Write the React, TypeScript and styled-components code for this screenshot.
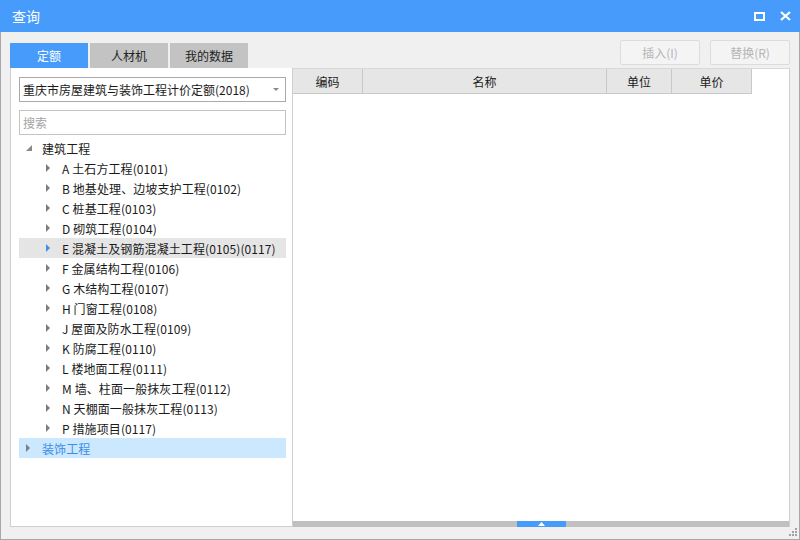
import { FC } from 'react'
import styled, { createGlobalStyle } from 'styled-components'

const GlobalStyle = createGlobalStyle`
	html, body {
		margin: 0;
		padding: 0;
		background: #ffffff;
	}
	body {
		font-family: "Noto Sans CJK SC", "Liberation Sans", sans-serif;
		font-size: 12px;
		color: #1a1a1a;
	}
`

const accent = '#479cfb'

const Window = styled.div`
	position: relative;
	width: 800px;
	height: 540px;
	box-sizing: border-box;
	display: flex;
	flex-direction: column;
	background: #f0f0f0;
	border: 1px solid #a8a8a8;
	border-top: none;
`

const TitleBar = styled.div`
	height: 32px;
	flex-shrink: 0;
	display: flex;
	align-items: center;
	justify-content: space-between;
	padding: 0 9px 0 12px;
	margin: 0 -1px;
	background: ${accent};
	color: #ffffff;
	font-size: 14px;
`

const TitleButtons = styled.div`
	display: flex;
	align-items: center;
	gap: 15px;
`

const Body = styled.div`
	flex: 1;
	display: flex;
	flex-direction: column;
	padding: 8px 9px 12px 9px;
	min-height: 0;
`

const TopRow = styled.div`
	height: 28px;
	display: flex;
	justify-content: space-between;
	align-items: flex-start;
`

const Tabs = styled.div`
	align-self: flex-end;
	display: flex;
	gap: 2px;
`

const Tab = styled.div<{ $active?: boolean }>`
	width: 78px;
	height: 25px;
	line-height: 25px;
	text-align: center;
	font-size: 12px;
	background: ${({ $active }) => ($active ? accent : '#c3c3c3')};
	color: ${({ $active }) => ($active ? '#ffffff' : '#222222')};
`

const Actions = styled.div`
	display: flex;
	gap: 10px;
`

const ActionButton = styled.button`
	width: 80px;
	height: 25px;
	box-sizing: border-box;
	background: #f4f4f4;
	border: 1px solid #dcdcdc;
	border-radius: 2px;
	font-family: inherit;
	font-size: 12px;
	color: #b5b5b5;
	padding: 0;
`

const Main = styled.div`
	flex: 1;
	display: grid;
	grid-template-columns: 283px 1fr;
	min-height: 0;
`

const LeftPanel = styled.div`
	background: #ffffff;
	border: 1px solid #cfcfcf;
	border-top: none;
	padding: 9px 6px 0 8px;
	display: flex;
	flex-direction: column;
`

const Combo = styled.div`
	height: 25px;
	box-sizing: border-box;
	border: 1px solid #aaaaaa;
	display: flex;
	align-items: center;
	justify-content: space-between;
	padding: 0 6px 0 3px;
	font-size: 12px;
	color: #1a1a1a;
`

const SearchBox = styled.div`
	margin-top: 8px;
	height: 25px;
	box-sizing: border-box;
	border: 1px solid #c4c4c4;
	display: flex;
	align-items: center;
	padding-left: 3px;
	color: #a3a3a3;
	font-size: 12px;
`

const Tree = styled.div`
	margin-top: 3px;
	display: flex;
	flex-direction: column;
`

const TreeRow = styled.div<{ $level: number; $state?: 'hover' | 'selected' }>`
	height: 20px;
	display: flex;
	align-items: center;
	padding-left: ${({ $level }) => $level * 20}px;
	white-space: nowrap;
	font-size: 12px;
	letter-spacing: 0.1px;
	background: ${({ $state }) => ($state === 'hover' ? '#e5e5e5' : $state === 'selected' ? '#cce8ff' : 'transparent')};
	color: ${({ $state }) => ($state === 'selected' ? '#3d8ee8' : '#1a1a1a')};
`

const Toggle = styled.span`
	width: 20px;
	height: 20px;
	display: flex;
	align-items: center;
	justify-content: center;
	margin-right: 3px;
`

const RightPanel = styled.div`
	background: #ffffff;
	border-top: 1px solid #d8d8d8;
	border-right: 1px solid #cfcfcf;
	display: flex;
	flex-direction: column;
	min-height: 0;
`

const HeaderRow = styled.div`
	display: flex;
	height: 25px;
`

const HeaderCell = styled.div<{ $width: number }>`
	width: ${({ $width }) => $width}px;
	box-sizing: border-box;
	background: #e6e6e6;
	border-right: 1px solid #c8c8c8;
	border-bottom: 1px solid #c8c8c8;
	display: flex;
	align-items: center;
	justify-content: center;
	font-size: 12px;
	color: #1a1a1a;
`

const GridSpace = styled.div`
	flex: 1;
`

const Splitter = styled.div`
	height: 6px;
	background: #c0c0c0;
	display: flex;
	justify-content: center;
`

const SplitterThumb = styled.div`
	width: 49px;
	height: 6px;
	background: ${accent};
	display: flex;
	align-items: center;
	justify-content: center;
`

const Grip = styled.svg`
	position: absolute;
	right: 1px;
	bottom: 2px;
`

const ExpandedIcon: FC = () => (
	<svg width="7" height="7" viewBox="0 0 7 7">
		<polygon points="6,0 6,6 0,6" fill="#8a8a8a" />
	</svg>
)

const CollapsedIcon: FC<{ color?: string }> = ({ color = '#7d7d7d' }) => (
	<svg width="6" height="8" viewBox="0 0 6 8" style={{ marginLeft: -3 }}>
		<polygon points="1,0 5,4 1,8" fill={color} />
	</svg>
)

type Node = { label: string; hover?: boolean }

const children: Node[] = [
	{ label: 'A 土石方工程(0101)' },
	{ label: 'B 地基处理、边坡支护工程(0102)' },
	{ label: 'C 桩基工程(0103)' },
	{ label: 'D 砌筑工程(0104)' },
	{ label: 'E 混凝土及钢筋混凝土工程(0105)(0117)', hover: true },
	{ label: 'F 金属结构工程(0106)' },
	{ label: 'G 木结构工程(0107)' },
	{ label: 'H 门窗工程(0108)' },
	{ label: 'J 屋面及防水工程(0109)' },
	{ label: 'K 防腐工程(0110)' },
	{ label: 'L 楼地面工程(0111)' },
	{ label: 'M 墙、柱面一般抹灰工程(0112)' },
	{ label: 'N 天棚面一般抹灰工程(0113)' },
	{ label: 'P 措施项目(0117)' },
]

const columns = [
	{ title: '编码', width: 70 },
	{ title: '名称', width: 244 },
	{ title: '单位', width: 65 },
	{ title: '单价', width: 80 },
]

export default function App() {
	return (
		<>
			<GlobalStyle />
			<Window>
				<TitleBar>
					<span>查询</span>
					<TitleButtons>
						<svg width="11" height="9" viewBox="0 0 11 9">
							<rect x="1" y="1" width="9" height="7" fill="none" stroke="#ffffff" strokeWidth="2" />
						</svg>
						<svg width="11" height="10" viewBox="0 0 11 10">
							<path d="M1 1 L10 9 M10 1 L1 9" stroke="#ffffff" strokeWidth="2.2" />
						</svg>
					</TitleButtons>
				</TitleBar>
				<Body>
					<TopRow>
						<Tabs>
							<Tab $active>定额</Tab>
							<Tab>人材机</Tab>
							<Tab>我的数据</Tab>
						</Tabs>
						<Actions>
							<ActionButton disabled>插入(I)</ActionButton>
							<ActionButton disabled>替换(R)</ActionButton>
						</Actions>
					</TopRow>
					<Main>
						<LeftPanel>
							<Combo>
								<span>重庆市房屋建筑与装饰工程计价定额(2018)</span>
								<svg width="6" height="3" viewBox="0 0 6 3">
									<polygon points="0,0 6,0 3,3" fill="#8a8a8a" />
								</svg>
							</Combo>
							<SearchBox>搜索</SearchBox>
							<Tree>
								<TreeRow $level={0}>
									<Toggle>
										<ExpandedIcon />
									</Toggle>
									建筑工程
								</TreeRow>
								{children.map((node) => (
									<TreeRow key={node.label} $level={1} $state={node.hover ? 'hover' : undefined}>
										<Toggle>
											<CollapsedIcon color={node.hover ? '#3d8ee8' : undefined} />
										</Toggle>
										{node.label}
									</TreeRow>
								))}
								<TreeRow $level={0} $state="selected">
									<Toggle>
										<CollapsedIcon />
									</Toggle>
									装饰工程
								</TreeRow>
							</Tree>
						</LeftPanel>
						<RightPanel>
							<HeaderRow>
								{columns.map((col) => (
									<HeaderCell key={col.title} $width={col.width}>
										{col.title}
									</HeaderCell>
								))}
							</HeaderRow>
							<GridSpace />
							<Splitter>
								<SplitterThumb>
									<svg width="7" height="4" viewBox="0 0 7 4">
										<polygon points="3.5,0 7,4 0,4" fill="#ffffff" />
									</svg>
								</SplitterThumb>
							</Splitter>
						</RightPanel>
					</Main>
				</Body>
				<Grip width="10" height="10" viewBox="0 0 10 10">
					<rect x="7" y="1" width="2" height="2" fill="#a3a3a3" />
					<rect x="4" y="4" width="2" height="2" fill="#a3a3a3" />
					<rect x="7" y="4" width="2" height="2" fill="#a3a3a3" />
					<rect x="1" y="7" width="2" height="2" fill="#a3a3a3" />
					<rect x="4" y="7" width="2" height="2" fill="#a3a3a3" />
					<rect x="7" y="7" width="2" height="2" fill="#a3a3a3" />
				</Grip>
			</Window>
		</>
	)
}
